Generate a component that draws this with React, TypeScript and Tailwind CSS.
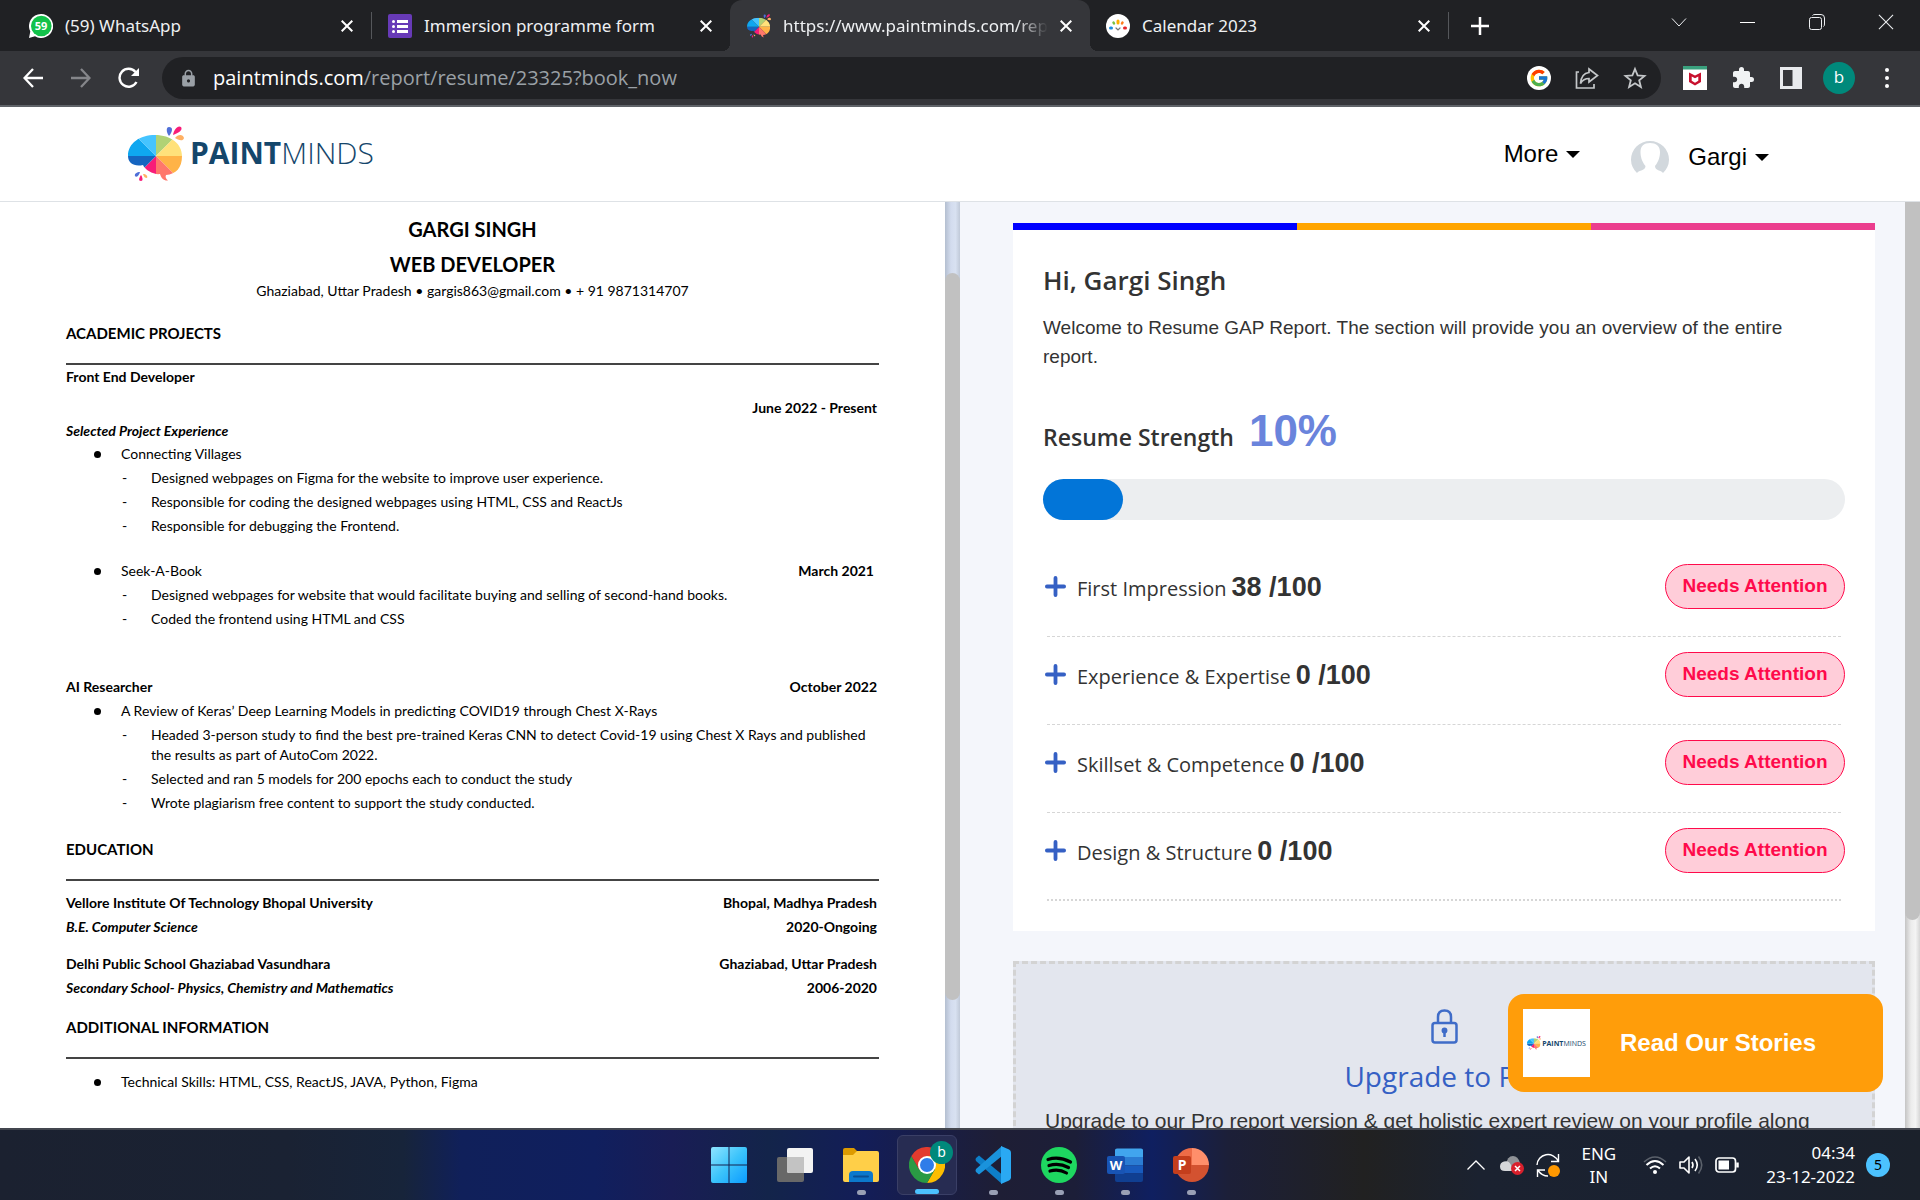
import React from 'react';
import { FcGoogle } from 'react-icons/fc';
import { MdExtension, MdLock } from 'react-icons/md';

const WEDGES: [string, string][] = [
  ['M28 30V-30H88Z', '#b0d275'],
  ['M28 30L88 -30V30Z', '#ffe17a'],
  ['M28 30H88V90Z', '#ffb347'],
  ['M28 30L88 90H28Z', '#ff776b'],
  ['M28 30V90H-32Z', '#f81d78'],
  ['M28 30L-32 90V30Z', '#1565c0'],
  ['M28 30H-32V-30Z', '#0fa7f0'],
  ['M28 30L-32 -30H28Z', '#45c4ff'],
];

function BrainLogo({ id, className }: { id: string; className: string }) {
  return (
    <svg viewBox="0 0 56 56" className={className} aria-hidden="true">
      <defs>
        <clipPath id={id}>
          <path d="M0 30C0 17 12 9 27 9C43 9 54 18 54 30C54 42 48 48 38 49C37 51 38 53 40 54.5C36 55 33 52 32 48C26 49 17 44 15 39C6 41 0 37 0 30Z" />
        </clipPath>
      </defs>
      <g clipPath={`url(#${id})`}>
        {WEDGES.map(([d, fill]) => (
          <path key={fill} d={d} fill={fill} />
        ))}
      </g>
      <path d="M41 10C38 6 38 1 41 1C45 1 45 5 41 10Z" fill="#4f6fd8" />
      <path d="M45 9C46 3 50 -1 53 1C55 4 51 7 45 9Z" fill="#f81d78" />
      <path d="M47 12C50 8 55 8 56 12C55 16 50 14 47 12Z" fill="#ffb063" />
      <path d="M12 46C11 50 8 52 7 50C6 48 9 46 12 46Z" fill="#4f6fd8" />
      <path d="M13 49C15 52 15 55 13 55C10 55 11 52 13 49Z" fill="#f81d78" />
      <path d="M15 48C18 48 20 50 19 52C17 52 16 51 15 48Z" fill="#ffb063" />
    </svg>
  );
}

function WhatsAppIcon() {
  return (
    <span className="relative flex size-6 shrink-0 items-center justify-center">
      <svg viewBox="0 0 24 24" className="absolute inset-0 size-6" aria-hidden="true">
        <path d="M12 0A12 12 0 1 1 6 22.300L0 24L1.300 17.500A12 12 0 0 1 12 0Z" fill="#fff" />
        <circle cx="12.300" cy="12" r="10.300" fill="#12c24a" />
      </svg>
      <span className="relative font-['Open_Sans'] text-[11px] font-bold leading-none text-white">59</span>
    </span>
  );
}

function FormsIcon() {
  return (
    <svg viewBox="0 0 24 24" className="size-6 shrink-0" aria-hidden="true">
      <rect width="24" height="24" rx="2" fill="#673ab7" />
      <path d="M9 6h11v3H9zM9 11h11v3H9zM9 16h11v3H9z" fill="#fff" />
      <circle cx="5.500" cy="7.500" r="1.500" fill="#fff" />
      <circle cx="5.500" cy="12.500" r="1.500" fill="#fff" />
      <circle cx="5.500" cy="17.500" r="1.500" fill="#fff" />
    </svg>
  );
}

function CalendarIcon() {
  return (
    <svg viewBox="0 0 24 24" className="size-6 shrink-0" fill="none" strokeLinecap="round" aria-hidden="true">
      <circle cx="12" cy="12" r="12" fill="#fff" />
      <path d="M12 7V9" stroke="#ffb000" strokeWidth="3" />
      <path d="M7.500 8.500L8 9.500" stroke="#7ac143" strokeWidth="2.500" />
      <path d="M16.500 8.500L16 9.500" stroke="#ff7a1a" strokeWidth="2.500" />
      <path d="M4.500 14H5.500" stroke="#1b8fe0" strokeWidth="3" />
      <path d="M18.500 14H19.500" stroke="#e5262b" strokeWidth="3" />
      <path d="M10 14L12 16L14 14" stroke="#777" strokeWidth="1.200" />
    </svg>
  );
}

function Cross({ className }: { className: string }) {
  return (
    <svg viewBox="0 0 12 12" className={className} fill="none" stroke="currentColor" aria-hidden="true">
      <path d="M.7.7L11.300 11.300M11.300.7L.7 11.300" />
    </svg>
  );
}

function Tab({ icon, title, active }: { icon: React.ReactNode; title: string; active?: boolean }) {
  return (
    <div
      className={
        active
          ? "relative flex w-[360px] min-w-0 items-center gap-3 rounded-t-xl bg-[#35363a] pl-[17px] pr-[18px] before:absolute before:-left-2 before:bottom-0 before:size-2 before:bg-[radial-gradient(circle_at_0_0,transparent_8px,#35363a_8px)] after:absolute after:-right-2 after:bottom-0 after:size-2 after:bg-[radial-gradient(circle_at_100%_0,transparent_8px,#35363a_8px)]"
          : 'flex w-[358px] min-w-0 items-center gap-3 pl-4 pr-[18px]'
      }
    >
      {icon}
      <span
        className={
          active
            ? 'min-w-0 flex-1 overflow-hidden whitespace-nowrap [mask-image:linear-gradient(to_right,black_88%,transparent)]'
            : 'min-w-0 flex-1 truncate'
        }
      >
        {title}
      </span>
      <button aria-label={`Close ${title}`} className="text-white">
        <Cross className="size-3 stroke-2" />
      </button>
    </div>
  );
}

function TabStrip() {
  return (
    <div className="flex h-[51px] justify-between bg-[#202124] pl-[13px] font-['Noto_Sans'] text-[17px] text-[#eef0f2]">
      <div className="flex min-w-0">
        <Tab icon={<WhatsAppIcon />} title="(59) WhatsApp" />
        <div className="my-3 w-px bg-[#55575b]" />
        <Tab icon={<FormsIcon />} title="Immersion programme form" />
        <Tab active icon={<BrainLogo id="tab-logo" className="size-6 shrink-0" />} title="https://www.paintminds.com/report/resume" />
        <Tab icon={<CalendarIcon />} title="Calendar 2023" />
        <div className="my-3 w-px bg-[#55575b]" />
        <button aria-label="New tab" className="ml-[22px] text-white">
          <svg viewBox="0 0 18 18" className="size-[18px]" stroke="currentColor" strokeWidth="2.500" aria-hidden="true">
            <path d="M9 0V18M0 9H18" />
          </svg>
        </button>
      </div>
      <div className="flex pb-[7px]">
        <button aria-label="Search tabs" className="flex w-[68px] items-center justify-center">
          <svg viewBox="0 0 16 9" className="w-4" fill="none" stroke="currentColor" aria-hidden="true">
            <path d="M1 .5L8 8L15 .5" />
          </svg>
        </button>
        <button aria-label="Minimize" className="flex w-[69px] items-center justify-center">
          <span className="h-px w-[15px] bg-white" />
        </button>
        <button aria-label="Restore" className="flex w-[69px] items-center justify-center">
          <svg viewBox="0 0 16 16" className="size-4" fill="none" stroke="currentColor" aria-hidden="true">
            <rect x=".5" y="3.500" width="12" height="12" rx="2" />
            <path d="M3.500 1.500Q4 .5 6 .5H12Q15.500.5 15.500 4V10Q15.500 12 14.500 12.500" />
          </svg>
        </button>
        <button aria-label="Close window" className="flex w-[69px] items-center justify-center">
          <Cross className="size-4 stroke-[.8]" />
        </button>
      </div>
    </div>
  );
}

const TOOL = 'flex w-12 shrink-0 items-center justify-center';

function Toolbar() {
  return (
    <div className="flex h-14 items-stretch border-b-2 border-[#5f6368] bg-[#35363a] px-[9px] py-[6px] font-['Open_Sans'] text-xl">
      <button aria-label="Back" className={TOOL}>
        <svg viewBox="0 0 20 20" className="size-5" fill="none" stroke="#fff" strokeWidth="2.300" aria-hidden="true">
          <path d="M20 10H1.500M10 1L1.500 10L10 19" />
        </svg>
      </button>
      <button aria-label="Forward" className={TOOL}>
        <svg viewBox="0 0 20 20" className="size-5" fill="none" stroke="#85868a" strokeWidth="2.300" aria-hidden="true">
          <path d="M0 10H18.500M10 1L18.500 10L10 19" />
        </svg>
      </button>
      <button aria-label="Reload" className={TOOL}>
        <svg viewBox="0 0 22 22" className="size-[22px]" aria-hidden="true">
          <path d="M18.500 15A9 9 0 1 1 17.500 5" fill="none" stroke="#fff" strokeWidth="2.400" />
          <path d="M21 1V9H13Z" fill="#fff" />
        </svg>
      </button>
      <div className="ml-[9px] flex min-w-0 flex-1 items-center rounded-full bg-[#202124] pl-[17px]">
        <MdLock className="size-[19px] shrink-0 text-[#9aa0a6]" aria-hidden="true" />
        <a href="#report" className="ml-[15px] min-w-0 flex-1 truncate text-[#9aa0a6]">
          <span className="text-white">paintminds.com</span>/report/resume/23325?book_now
        </a>
        <button aria-label="Search with Google" className={TOOL}>
          <span className="flex size-6 items-center justify-center rounded-full bg-white">
            <FcGoogle className="size-5" />
          </span>
        </button>
        <button aria-label="Share" className={TOOL}>
          <svg viewBox="0 0 24 24" className="size-6" fill="none" stroke="#c4c7c9" strokeWidth="1.700" aria-hidden="true">
            <path d="M4 6H1.500V22H19V18" />
            <path d="M14 3L22.500 9.500L14 16V12.500C10 12.500 7.500 14 5.500 17.500C6 11 9 7 14 6.500Z" />
          </svg>
        </button>
        <button aria-label="Bookmark" className={TOOL}>
          <svg viewBox="0 0 24 24" className="size-6" fill="none" stroke="#c4c7c9" strokeWidth="1.800" aria-hidden="true">
            <path d="M12 3L14.600 9.400L21.500 9.900L16.200 14.300L17.900 21L12 17.300L6.100 21L7.800 14.300L2.500 9.900L9.400 9.400Z" />
          </svg>
        </button>
        <span className="w-[2px]" />
      </div>
      <button aria-label="McAfee" className={`${TOOL} ml-[10px]`}>
        <svg viewBox="0 0 24 24" className="size-6" aria-hidden="true">
          <rect width="24" height="24" fill="#fff" />
          <rect width="24" height="3.500" fill="#3aa17e" />
          <path d="M6 6.500L12 9.500L18 6.500V16L12 19.500L6 16Z" fill="#c8102e" />
          <path d="M8.700 10.500L12 12.300L15.300 10.500V14.800L12 16.700L8.700 14.800Z" fill="#fff" />
        </svg>
      </button>
      <button aria-label="Extensions" className={TOOL}>
        <MdExtension className="size-6 text-[#f1f3f4]" />
      </button>
      <button aria-label="Side panel" className={TOOL}>
        <svg viewBox="0 0 22 22" className="size-[22px]" aria-hidden="true">
          <path d="M0 0H22V22H0ZM3 3V19H12.500V3Z" fill="#e8eaed" fillRule="evenodd" />
        </svg>
      </button>
      <button aria-label="Profile" className={TOOL}>
        <span className="flex size-8 items-center justify-center rounded-full bg-[#00897b] pb-[2px] text-[17px] text-white">b</span>
      </button>
      <button aria-label="Menu" className={TOOL}>
        <svg viewBox="0 0 4 20" className="h-5 w-1" fill="#fff" aria-hidden="true">
          <circle cx="2" cy="2" r="2" />
          <circle cx="2" cy="10" r="2" />
          <circle cx="2" cy="18" r="2" />
        </svg>
      </button>
    </div>
  );
}

function Caret() {
  return (
    <svg viewBox="0 0 14 7" className="w-[14px]" fill="currentColor" aria-hidden="true">
      <path d="M0 0H14L7 7Z" />
    </svg>
  );
}

function SiteHeader() {
  return (
    <header className="flex h-[95px] items-center justify-between border-b border-[#dee2e6] bg-white pl-[128px] pr-[151px] text-2xl text-black">
      <a href="#home" className="flex items-center gap-[6px] font-['Open_Sans'] text-[30px] leading-none text-[#14466b]" aria-label="Paintminds">
        <BrainLogo id="site-logo" className="size-14" />
        <span className="pb-[3px]">
          <span className="font-bold">PAINT</span>
          <span className="font-light">MINDS</span>
        </span>
      </a>
      <nav className="flex items-center">
        <button className="flex items-center gap-2">
          More <Caret />
        </button>
        <button className="ml-[51px] flex items-center pt-[6px]">
          <svg viewBox="0 0 38 36" className="mr-[19px] w-[38px]" aria-hidden="true">
            <path d="M6 34A19 18.500 0 1 1 32 34C30 31 24 32 24 27C28 22 29 17 29 13C29 7 25 4 19 4C13 4 9.500 7 9.500 13C9.500 17 10.500 22 14.500 27C14.500 32 8 31 6 34Z" fill="#d2d8dd" />
          </svg>
          Gargi <span className="ml-2"><Caret /></span>
        </button>
      </nav>
    </header>
  );
}

function Item({ children, date }: { children: React.ReactNode; date?: string }) {
  return (
    <li className="flex">
      <span className="ml-[28px] flex w-[27px] shrink-0 items-center">
        <span className="size-[7px] rounded-full bg-black" />
      </span>
      <span className="flex-1">{children}</span>
      {date && <span className="pr-[5px] font-bold">{date}</span>}
    </li>
  );
}

function SubItem({ children }: { children: React.ReactNode }) {
  return (
    <li className="flex">
      <span className="ml-[56px] w-[29px] shrink-0">-</span>
      <span className="flex-1">{children}</span>
    </li>
  );
}

function SectionTitle({ children }: { children: React.ReactNode }) {
  return (
    <>
      <h2 className="text-[15px] font-bold leading-5">{children}</h2>
      <hr className="mt-5 border-t-2 border-[#444]" />
    </>
  );
}

function Pair({ left, right, italic }: { left: string; right: string; italic?: boolean }) {
  return (
    <div className="flex justify-between pr-[2px] font-bold">
      <span className={italic ? 'italic' : ''}>{left}</span>
      <span>{right}</span>
    </div>
  );
}

function Resume() {
  return (
    <article className="min-w-0 flex-1 bg-white pl-[66px] pr-[66px] pt-[13px] font-['Lato'] text-[14px] leading-5 text-black">
      <div className="text-center">
        <h1 className="text-xl font-bold leading-7">GARGI SINGH</h1>
        <p className="mt-[7px] text-xl font-bold leading-7">WEB DEVELOPER</p>
        <p className="mt-[3px]">Ghaziabad, Uttar Pradesh • gargis863@gmail.com • + 91 9871314707</p>
      </div>
      <section className="mt-[22px]">
        <SectionTitle>ACADEMIC PROJECTS</SectionTitle>
        <p className="mt-[2px] font-bold">Front End Developer</p>
        <p className="mt-[11px] pr-[2px] text-right font-bold">June 2022 - Present</p>
        <p className="mt-[3px] font-bold italic">Selected Project Experience</p>
        <ul className="mt-[3px] flex flex-col gap-1">
          <Item>Connecting Villages</Item>
          <SubItem>Designed webpages on Figma for the website to improve user experience.</SubItem>
          <SubItem>Responsible for coding the designed webpages using HTML, CSS and ReactJs</SubItem>
          <SubItem>Responsible for debugging the Frontend.</SubItem>
        </ul>
        <ul className="mt-[25px] flex flex-col gap-1">
          <Item date="March 2021">Seek-A-Book</Item>
          <SubItem>Designed webpages for website that would facilitate buying and selling of second-hand books.</SubItem>
          <SubItem>Coded the frontend using HTML and CSS</SubItem>
        </ul>
        <div className="mt-12">
          <Pair left="AI Researcher" right="October 2022" />
        </div>
        <ul className="mt-1 flex flex-col gap-1">
          <Item>A Review of Keras’ Deep Learning Models in predicting COVID19 through Chest X-Rays</Item>
          <SubItem>
            Headed 3-person study to find the best pre-trained Keras CNN to detect Covid-19 using Chest X Rays and published the
            results as part of AutoCom 2022.
          </SubItem>
          <SubItem>Selected and ran 5 models for 200 epochs each to conduct the study</SubItem>
          <SubItem>Wrote plagiarism free content to support the study conducted.</SubItem>
        </ul>
      </section>
      <section className="mt-[26px]">
        <SectionTitle>EDUCATION</SectionTitle>
        <div className="mt-3 flex flex-col gap-1">
          <Pair left="Vellore Institute Of Technology Bhopal University" right="Bhopal, Madhya Pradesh" />
          <Pair italic left="B.E. Computer Science" right="2020-Ongoing" />
        </div>
        <div className="mt-[17px] flex flex-col gap-1">
          <Pair left="Delhi Public School Ghaziabad Vasundhara" right="Ghaziabad, Uttar Pradesh" />
          <Pair italic left="Secondary School- Physics, Chemistry and Mathematics" right="2006-2020" />
        </div>
      </section>
      <section className="mt-[19px]">
        <SectionTitle>ADDITIONAL INFORMATION</SectionTitle>
        <ul className="mt-[13px]">
          <Item>Technical Skills: HTML, CSS, ReactJS, JAVA, Python, Figma</Item>
        </ul>
      </section>
    </article>
  );
}

const SCORES = [
  { name: 'First Impression', score: 38 },
  { name: 'Experience & Expertise', score: 0 },
  { name: 'Skillset & Competence', score: 0 },
  { name: 'Design & Structure', score: 0 },
];

function ScoreCard() {
  return (
    <section className="bg-white pb-[30px]">
      <div className="grid h-[7px] grid-cols-[33fr_34fr_33fr]">
        <span className="bg-[#0000ff]" />
        <span className="bg-[#ffa500]" />
        <span className="bg-[#eb3d8d]" />
      </div>
      <div className="px-[30px] pt-8">
        <h2 className="font-['Open_Sans'] text-[26px] font-semibold leading-9 text-[#333]">Hi, Gargi Singh</h2>
        <p className="mt-[15px] text-[19px] leading-[29px] text-[#333]">
          Welcome to Resume GAP Report. The section will provide you an overview of the entire{' '}
          <span className="block">report.</span>
        </p>
        <div className="mt-[35px] flex items-baseline gap-[15px] leading-[50px]">
          <h3 className="font-['Open_Sans'] text-[23px] font-semibold text-[#333]">Resume Strength</h3>
          <span className="text-[44px] font-bold text-[#6a84dc]">10%</span>
        </div>
        <div className="mt-[17px] h-[41px] rounded-full bg-[#eceef0]" role="progressbar" aria-label="Resume Strength" aria-valuenow={10}>
          <div className="h-full rounded-full bg-[#0275d8]" style={{ width: '10%' }} />
        </div>
        <ul className="mt-[29px]">
          {SCORES.map(({ name, score }, i) => (
            <li key={name} className="pt-[15px]">
              <div className="flex h-[45px] items-center justify-between">
                <button className="flex items-center gap-[11px] pl-[2px] text-[#333]">
                  <svg viewBox="0 0 22 22" className="size-[21px]" stroke="#3560c4" strokeWidth="4" strokeLinecap="round" aria-hidden="true">
                    <path d="M11 2V20M2 11H20" />
                  </svg>
                  <span className="flex items-baseline gap-[5px] leading-9">
                    <span className="font-['Open_Sans'] text-xl font-medium">{name}</span>
                    <span className="text-[27px] font-bold">{score} /100</span>
                  </span>
                </button>
                <span className="flex h-[45px] w-[180px] items-center justify-center rounded-full border border-[#ff0a4b] bg-[#ffcdd9] text-[19px] font-bold text-[#ff0a4b]">
                  Needs Attention
                </span>
              </div>
              <hr
                className={
                  i === SCORES.length - 1
                    ? 'mx-1 mt-[26px] border-t-2 border-dotted border-[#d6d6d6]'
                    : 'mx-1 mt-[27px] border-t border-dashed border-[#d6d6d6]'
                }
              />
            </li>
          ))}
        </ul>
      </div>
    </section>
  );
}

function UpgradeCard() {
  return (
    <section className="mt-[30px] border-[3px] border-dashed border-[#d3d3d3] bg-[#e3e6ee] px-[29px] pb-10 pt-[45px]">
      <svg viewBox="0 0 27 35" className="mx-auto w-[27px]" fill="none" stroke="#3f6cc8" strokeWidth="2.500" aria-hidden="true">
        <rect x="1.500" y="14" width="24" height="19.500" rx="2.500" />
        <path d="M7 14V8Q7 1.500 13.500 1.500T20 8V14" />
        <circle cx="13.500" cy="21.500" r="1.700" fill="#3f6cc8" />
        <path d="M13.500 22V28" />
      </svg>
      <h2 className="mt-[14px] text-center font-['Open_Sans'] text-[28px] leading-9 text-[#3560c4]">Upgrade to Pro</h2>
      <p className="mt-3 text-[21px] leading-[30px] text-[#333]">
        Upgrade to our Pro report version &amp; get holistic expert review on your profile along
      </p>
    </section>
  );
}

function StoriesButton() {
  return (
    <button className="absolute bottom-9 right-[37px] flex h-[98px] w-[375px] items-center gap-[30px] rounded-2xl bg-[#ff9d0a] pl-[15px] text-2xl font-bold text-white">
      <span className="flex h-[68px] w-[67px] items-center justify-center gap-px bg-white font-['Open_Sans'] text-[7px] leading-none text-[#14466b]">
        <BrainLogo id="story-logo" className="size-[14px]" />
        <span>
          <span className="font-bold">PAINT</span>
          <span className="font-normal">MINDS</span>
        </span>
      </span>
      Read Our Stories
    </button>
  );
}

function Taskbar() {
  const slot = 'relative flex h-[60px] w-[60px] items-center justify-center rounded-md';
  const dot = 'absolute bottom-0 h-[5px] w-[9px] rounded-full bg-[#9aa0b5]';
  return (
    <footer className="grid h-[72px] shrink-0 grid-cols-[1fr_auto_1fr] items-center border-t-2 border-[#43464f] bg-[linear-gradient(90deg,#1b2130_0%,#1a2233_15%,#17243a_21%,#10205a_24%,#101f5e_31%,#191d55_35%,#13244a_40%,#131d58_45%,#1e1e35_52%,#1c1e38_56%,#0f1f60_60%,#1c1f38_64%,#212121_71%,#1b2230_77%,#1a2130_88%,#1b212b_100%)] font-['Noto_Sans'] text-white">
      <span />
      <div className="flex gap-[6px]">
        <button aria-label="Start" className={slot}>
          <svg viewBox="0 0 36 36" className="size-9" aria-hidden="true">
            <defs>
              <linearGradient id="win" x1="0" y1="0" x2="1" y2="1">
                <stop offset="0" stopColor="#8fe4ff" />
                <stop offset=".5" stopColor="#3cc4fb" />
                <stop offset="1" stopColor="#0b9bff" />
              </linearGradient>
            </defs>
            <path d="M2 0H17.500V17.500H0V2Q0 0 2 0ZM18.500 0H34Q36 0 36 2V17.500H18.500ZM0 18.500H17.500V36H2Q0 36 0 34ZM18.500 18.500H36V34Q36 36 34 36H18.500Z" fill="url(#win)" />
          </svg>
        </button>
        <button aria-label="Task view" className={slot}>
          <svg viewBox="0 0 36 36" className="size-9" aria-hidden="true">
            <rect x="0" y="10" width="27" height="25" rx="2" fill="#686868" />
            <rect x="10" y="1" width="26" height="25" rx="2" fill="#f3f3f3" />
            <path d="M10 10H27V26H12Q10 26 10 24Z" fill="#c3c3c3" />
          </svg>
        </button>
        <button aria-label="File Explorer" className={slot}>
          <svg viewBox="0 0 36 36" className="size-9" aria-hidden="true">
            <path d="M0 3Q0 1 2 1H11L15 5V10H0Z" fill="#dd9a00" />
            <path d="M0 8H10L14 4H34Q36 4 36 6V33Q36 35 34 35H2Q0 35 0 33Z" fill="#ffcf48" />
            <path d="M6 35V28Q6 24 10 24H26Q30 24 30 28V35Z" fill="#0c78cc" />
            <path d="M11 29.500H25" stroke="#0a4f94" strokeWidth="2" strokeLinecap="round" />
          </svg>
          <span className={dot} />
        </button>
        <button aria-label="Chrome" className={`${slot} border border-[#3a3f66] bg-[#272c52]`}>
          <svg viewBox="0 0 36 36" className="size-9" aria-hidden="true">
            <path d="M18 9H33.600A18 18 0 0 1 18 36L25.800 22.500Z" fill="#fdbd00" />
            <path d="M18 9L25.800 22.500L18 36A18 18 0 0 1 2.400 9L10.200 22.500Z" fill="#2a9a44" />
            <path d="M18 18L10.200 22.500L2.400 9A18 18 0 0 1 33.600 9H18Z" fill="#e33b2e" />
            <circle cx="18" cy="18" r="9" fill="#fff" />
            <circle cx="18" cy="18" r="7" fill="#2f7de9" />
          </svg>
          <span className="absolute right-[3px] top-[5px] flex size-[23px] items-center justify-center rounded-full bg-[#00897b] pb-[2px] text-sm leading-none">b</span>
          <span className="absolute bottom-0 h-[5px] w-6 rounded-full bg-[#4cc2ff]" />
        </button>
        <button aria-label="Visual Studio Code" className={slot}>
          <svg viewBox="0 0 36 38" className="h-[38px] w-9" aria-hidden="true">
            <path d="M1 12L4 9.500L27 28.500V38L1 15Q0 13 1 12Z" fill="#0d7fc9" />
            <path d="M1 26L4 28.500L27 10V0L1 23Q0 25 1 26Z" fill="#1a93dc" />
            <path d="M26 0L34 3.500Q36 4.500 36 6.500V31.500Q36 33.500 34 34.500L26 38Z" fill="#2aa9f3" />
          </svg>
          <span className={dot} />
        </button>
        <button aria-label="Spotify" className={slot}>
          <svg viewBox="0 0 36 36" className="size-9" aria-hidden="true">
            <circle cx="18" cy="18" r="18" fill="#1ed760" />
            <path d="M7 12.500Q18 9 29.500 15M8 18.500Q18 15.500 27.500 20.500M9 24Q18 21.500 25.500 26" fill="none" stroke="#000" strokeWidth="3.200" strokeLinecap="round" />
          </svg>
          <span className={dot} />
        </button>
        <button aria-label="Word" className={slot}>
          <svg viewBox="0 0 36 36" className="size-9" aria-hidden="true">
            <path d="M8 3Q8 1.500 10 1.500H34Q36 1.500 36 3V10H8Z" fill="#41a5ee" />
            <path d="M8 10H36V18.500H8Z" fill="#2b7cd3" />
            <path d="M8 18.500H36V26.500H8Z" fill="#185abd" />
            <path d="M8 26.500H36V33Q36 35 34 35H10Q8 35 8 33Z" fill="#103f91" />
            <rect x="0" y="9" width="18" height="18" rx="2" fill="#1854b4" />
          </svg>
          <span className="absolute left-[12px] top-[21px] w-[18px] text-center text-[13px] font-bold leading-[18px]">W</span>
          <span className={dot} />
        </button>
        <button aria-label="PowerPoint" className={slot}>
          <svg viewBox="0 0 36 36" className="size-9" aria-hidden="true">
            <path d="M19 1A17 17 0 0 0 2 18H19Z" fill="#ed6c47" />
            <path d="M19 1A17 17 0 0 1 36 18H19Z" fill="#ff8f6b" />
            <path d="M2 18A17 17 0 0 0 36 18Z" fill="#d35230" />
            <rect x="0" y="9" width="18" height="18" rx="2" fill="#c43e1c" />
          </svg>
          <span className="absolute left-[12px] top-[21px] w-[18px] text-center text-[14px] font-bold leading-[18px]">P</span>
          <span className={dot} />
        </button>
      </div>
      <div className="flex items-center justify-end pr-[30px] text-[17px] leading-6">
        <svg viewBox="0 0 18 10" className="mr-[15px] w-[18px]" fill="none" stroke="#fff" strokeWidth="1.300" aria-hidden="true">
          <path d="M.5 9.500L9 1L17.500 9.500" />
        </svg>
        <svg viewBox="0 0 24 20" className="mr-3 w-6" aria-hidden="true">
          <path d="M6 10Q7 1 13 1Q18 1 20 8Q22 16 17 16H8Z" fill="#8f9297" />
          <path d="M5 16Q0 16 0 11.500Q0 7.500 4 6.500Q9 5 11 10L13 16Z" fill="#d5d7da" />
          <circle cx="17.500" cy="13.500" r="6.500" fill="#d9202c" />
          <path d="M15 11L20 16M20 11L15 16" stroke="#fff" strokeWidth="1.500" />
        </svg>
        <svg viewBox="0 0 24 24" className="mr-[22px] w-6" fill="none" stroke="#fff" strokeWidth="1.400" aria-hidden="true">
          <path d="M1 12A11 11 0 0 1 22 8M22.500 1V8.500H15M1.500 24V17H9M2 17.500Q6 23 12 23" />
          <circle cx="18" cy="18" r="6" fill="#ff9800" stroke="none" />
        </svg>
        <p className="mr-[27px] text-center leading-[23px]">ENG<br />IN</p>
        <svg viewBox="0 0 24 18" className="mr-3 w-6" fill="none" stroke="#fff" strokeWidth="2" aria-hidden="true">
          <path d="M1 6Q12 -4 23 6" stroke="#5b616b" strokeWidth="1.500" />
          <path d="M3.500 9Q12 1 20.500 9M7 12.500Q12 8 17 12.500" />
          <circle cx="12" cy="16" r="2" fill="#fff" stroke="none" />
        </svg>
        <svg viewBox="0 0 24 20" className="mr-3 w-6" fill="none" stroke="#fff" strokeWidth="1.600" aria-hidden="true">
          <path d="M1 7H5L10 2V18L5 13H1Z" strokeLinejoin="round" />
          <path d="M13 7Q15 10 13 13M16 4Q20.500 10 16 16" />
          <path d="M19.500 1.500Q26 10 19.500 18.500" stroke="#5b616b" />
        </svg>
        <svg viewBox="0 0 24 16" className="mr-[27px] w-6" fill="none" stroke="#fff" strokeWidth="1.700" aria-hidden="true">
          <rect x="1" y="1" width="19.500" height="14" rx="3" />
          <rect x="3.500" y="3.500" width="10.500" height="9" fill="#fff" stroke="none" />
          <path d="M22.500 5.500V10.500" strokeWidth="2.500" />
        </svg>
        <p className="text-right">04:34<br />23-12-2022</p>
        <span className="ml-[11px] flex size-6 items-center justify-center rounded-full bg-[#4cc2ff] text-sm text-black">5</span>
      </div>
    </footer>
  );
}

export default function App() {
  return (
    <div className="flex h-screen flex-col overflow-hidden bg-white font-['Liberation_Sans',Arial,sans-serif]">
      <div className="shrink-0">
        <TabStrip />
        <Toolbar />
        <SiteHeader />
      </div>
      <main className="flex min-h-0 flex-1">
        <div className="flex w-1/2 overflow-hidden">
          <Resume />
          <div className="flex w-[15px] flex-col bg-[linear-gradient(90deg,#b4bfd0,#d3dcee_40%,#d8e1f1_70%,#c0c9d8)]" aria-hidden="true">
            <span className="flex-[71]" />
            <span className="flex-[727] rounded-full bg-[#c1c1c1]" />
            <span className="flex-[128]" />
          </div>
        </div>
        <div className="relative flex w-1/2 overflow-hidden bg-[#f4f6fb]">
          <div className="min-w-0 flex-1 pl-[53px] pr-[30px] pt-[21px]">
            <ScoreCard />
            <UpgradeCard />
          </div>
          <div className="flex w-[15px] flex-col bg-[linear-gradient(90deg,#c4c4c4,#ececec_40%,#f4f4f4_70%,#d6d6d6)]" aria-hidden="true">
            <span className="flex-[718] rounded-b-full bg-[#c1c1c1]" />
            <span className="flex-[208]" />
          </div>
          <StoriesButton />
        </div>
      </main>
      <Taskbar />
    </div>
  );
}
